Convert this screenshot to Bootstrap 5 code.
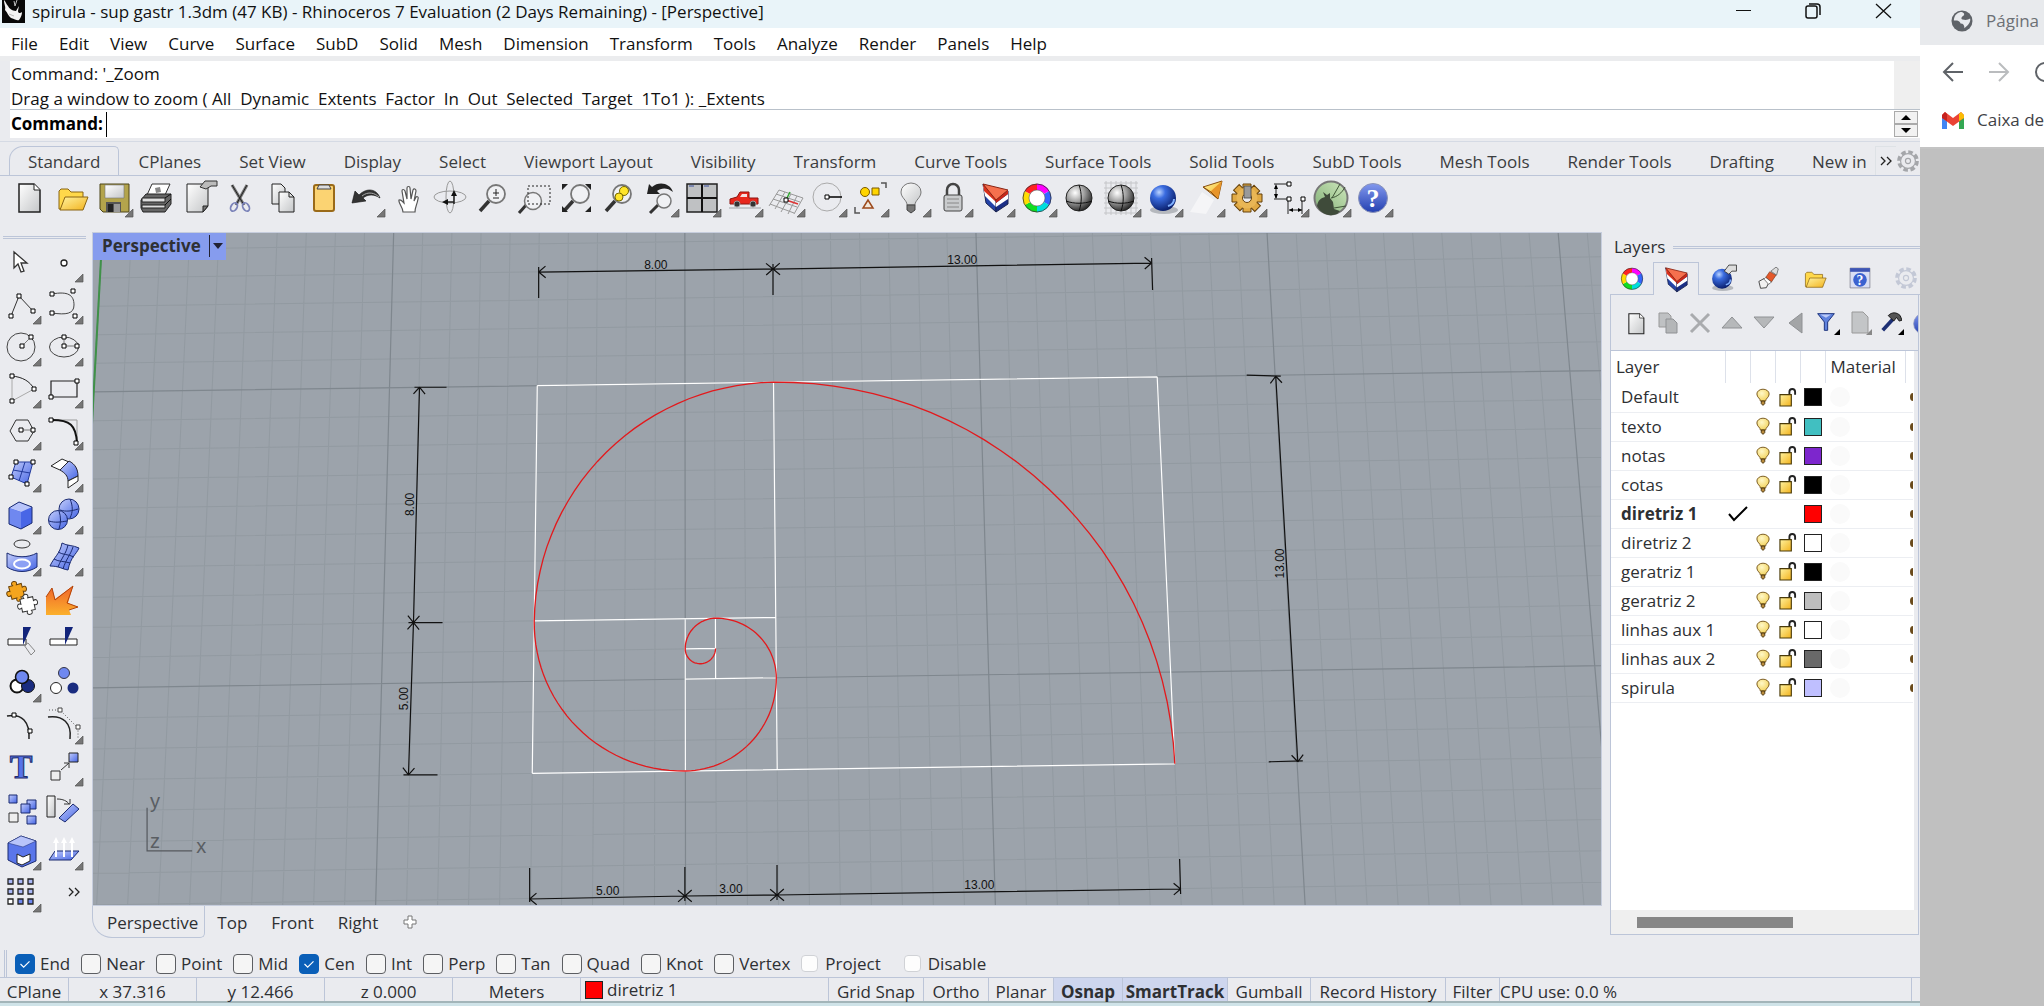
<!DOCTYPE html>
<html lang="en">
<head>
<meta charset="utf-8">
<meta name="viewport" content="width=device-width, initial-scale=1">
<title>spirula - Rhinoceros 7</title>
<link rel="stylesheet" href="https://cdn.jsdelivr.net/npm/bootstrap@5.3.0/dist/css/bootstrap.min.css">
<style>
:root{--face:#eaebef;--line:#bcc5d8;--ink:#2e3033}
body{font-family:"Open Sans","Noto Sans",sans-serif;font-size:17px;line-height:24px;color:var(--ink);background:var(--face)}
button,input{font:inherit;color:inherit}
button{background:none;border:0;padding:0}
svg{display:block}
.titlebar{height:28px;background:#e9f4f9;color:#111;padding-left:2px}
.titlebar .caption{line-height:24px;padding-left:7px}
.winbtns{gap:45px;padding-right:24px;height:22px}
.menus{height:28px;background:#fff;padding-left:1px}
.menus a{color:#111;text-decoration:none;padding:0 11px 0 10px;line-height:32px}
.cmdarea{border-top:5px solid #ebecee;padding-left:10px;background:var(--face);height:85px}
.history{height:48px;background:#fff;color:#111;padding-left:1px;border-right:26px solid #efefef;white-space:pre;line-height:25px}
.cmdline{height:29px;background:#fff;border-top:1px solid #b9c1ca;color:#000;padding-left:1px}
.cmdline input{border:0;outline:0;background:none;min-width:0;border-left:1px solid #000;height:25px;margin-left:3px}
.spinner{padding-right:2px}
.spin{width:24px;height:13px;border:1px solid #aaa;background:#f2f2f2}
.grip{width:3px;border:solid var(--line);border-width:0 1px}
.toolzone{border-top:1px solid #d5dae4;height:91px}
.tabstrip{height:34px;padding-left:9px;border-bottom:1px solid var(--line);overflow:hidden}
.tabstrip .ttab{padding:0 18px;line-height:29px;height:29px;margin-top:4px;white-space:nowrap;border:1px solid transparent;color:#3b3d40}
.tabstrip .ttab.on{border-color:var(--line);border-bottom-color:var(--face);border-radius:14px 5px 0 0;height:30px}
.toolrow{padding-left:8px}
.tool{width:42px;height:42px;flex:none}
.leftbar{width:92px;flex:none}
.leftbar .grip2{height:3px;border:solid var(--line);border-width:1px 0;margin:4px 6px 2px 3px}
.leftgrid{display:grid;grid-template-columns:42px 42px}
.viewport{background:#9ca3ab;border:1px solid #c6cddd;min-width:0;min-height:0;overflow:hidden}
.vlabel{top:0;left:0;height:27px;background:#869cee;font-weight:700;line-height:26px;padding-left:9px}
.vlabel .bar{width:1px;height:22px;background:#223;margin:2px 0 0 8px}
.viewtabs{height:44px}
.viewtabs button{height:32px;padding:0 12px;line-height:34px}
.viewtabs .on{border:1px solid var(--line);border-top:0;border-radius:0 0 5px 20px;padding:0 6px 0 14px}
.osnaps{height:27px;padding-left:4px}
.osnaps label{margin-right:11px;gap:5px}
.osnaps input{width:20px;height:20px;appearance:none;border:1px solid #5c5e62;border-radius:4px;background:#f5f5f5;margin:0}
.osnaps input:checked{border-color:#0a5fb8;background:#0a5fb8 url("data:image/svg+xml,%3Csvg xmlns='http://www.w3.org/2000/svg' viewBox='0 0 20 20'%3E%3Cpath d='M5 10l3.500 3.500L15 7' fill='none' stroke='white' stroke-width='1.300'/%3E%3C/svg%3E")}
.osnaps .soft{gap:7px;margin-right:23px}
.osnaps .soft input{width:17px;height:17px;border-color:#d0d2d6;background:#fdfdfd}
.status{height:26px;border-top:1px solid var(--line);border-bottom:2px solid #a3b5b9;line-height:27px}
.status>*{border-right:1px solid var(--line);text-align:center;flex:none;height:23px;white-space:nowrap}
.status .on{background:#ced6ee;font-weight:700}
.deskedge{height:3px;background:#cfe3e8}
.side{width:318px;flex:none;padding-left:8px}
.side .grip2{height:3px;border:solid var(--line);border-width:1px 0}
.phead{height:30px}
.ptabs{height:33px}
.ptabs button{width:46px;height:33px;border-bottom:1px solid var(--line);flex:none;display:flex;justify-content:center;align-items:center}
.ptabs button:first-child{width:43px}
.ptabs button.on{border:1px solid var(--line);border-bottom:0}
.panelbox{border:1px solid var(--line);border-top:0;margin-right:1px;min-height:0}
.ptools{height:56px;overflow:hidden;padding-left:9px;border-bottom:1px solid var(--line)}
.ptools button{width:32px;height:36px;flex:none;display:flex;justify-content:center;align-items:center}
.layers{table-layout:fixed;width:302px;margin:0;border-collapse:collapse}
.layers th{height:32px;font-weight:400;border-right:1px solid #dde1ea;padding:0 0 0 5px;overflow:hidden;white-space:nowrap}
.layers td{height:29px;padding:0;border-bottom:1px solid #eceef2;vertical-align:middle}
.layers td svg{margin:auto}
.layers .nm{padding-left:10px;white-space:nowrap}
.swatch{width:18px;height:18px;border:1px solid #222;display:block;margin:0 auto}
.matdot{width:20px;height:20px;border-radius:50%;background:#fafafa;margin-left:5px}
.hscroll{height:24px;background:#efefef;padding:7px 0 0 26px}
.hscroll div{width:156px;height:11px;background:#878787}
.browser{width:124px;flex:none;background:#c0c0c0;overflow:hidden;white-space:nowrap}
.btab{height:45px;background:#e8eaed;color:#6c7075;padding:0 0 4px 31px;gap:13px}
.bnav{height:54px;background:#fff;padding-left:22px}
.bmarks{height:50px;background:#fff;color:#3f4246;padding:0 0 6px 22px;gap:13px;border-bottom:2px solid #c4c4c4}
</style>
<script src="https://cdn.jsdelivr.net/npm/bootstrap@5.3.0/dist/js/bootstrap.bundle.min.js"></script>
</head>
<body class="d-flex vh-100 overflow-hidden">

<svg width="0" height="0" class="position-absolute" aria-hidden="true">
<defs>
<linearGradient id="gDoc" x1="0" y1="0" x2="1" y2="1"><stop offset="0" stop-color="#fff"/><stop offset="1" stop-color="#c4c6c8"/></linearGradient>
<linearGradient id="gYel" x1="0" y1="0" x2="1" y2="1"><stop offset="0" stop-color="#fff3a0"/><stop offset="1" stop-color="#f2b21c"/></linearGradient>
<linearGradient id="gBlu" x1="0" y1="0" x2="1" y2="1"><stop offset="0" stop-color="#c3cdfb"/><stop offset="1" stop-color="#4464e4"/></linearGradient>
<linearGradient id="gOra" x1="0" y1="0" x2="0" y2="1"><stop offset="0" stop-color="#f0642a"/><stop offset="1" stop-color="#fbb02c"/></linearGradient>
<linearGradient id="gGreen" x1="1" y1="0" x2="0" y2="1"><stop offset="0" stop-color="#cfe8bd"/><stop offset="1" stop-color="#7fae74"/></linearGradient>
<radialGradient id="gBall" cx=".35" cy=".3" r=".75"><stop offset="0" stop-color="#fff"/><stop offset=".5" stop-color="#999"/><stop offset="1" stop-color="#222"/></radialGradient>
<radialGradient id="gSea" cx=".35" cy=".28" r=".8"><stop offset="0" stop-color="#bcd4ff"/><stop offset=".3" stop-color="#3a6ce0"/><stop offset="1" stop-color="#04155e"/></radialGradient>
<radialGradient id="gBulb" cx=".4" cy=".35" r=".7"><stop offset="0" stop-color="#fff8c8"/><stop offset="1" stop-color="#f3d25a"/></radialGradient>
<linearGradient id="gHelp" x1="0" y1="0" x2="0" y2="1"><stop offset="0" stop-color="#8298ee"/><stop offset="1" stop-color="#2340b0"/></linearGradient>
</defs>
<symbol id="fly" viewBox="0 0 42 42"><path d="M33 41l8-8v8z" fill="#777" stroke="#555" stroke-width=".7"/></symbol>
<symbol id="page" viewBox="0 0 42 42"><path d="M11 8h15l6 6v22H11z" fill="url(#gDoc)" stroke="#222" stroke-width="1.500"/><path d="M26 8v6h6" fill="#fff" stroke="#222"/></symbol>
<symbol id="open" viewBox="0 0 42 42"><path d="M9 33V15l2-2h7l3 3h12v17z" fill="#ffd84a" stroke="#8a6412"/><path d="M10 34l5-13h23l-5 13z" fill="url(#gYel)" stroke="#8a6412"/></symbol>
<symbol id="save" viewBox="0 0 42 42"><path d="M8 8h29v28H11l-3-3z" fill="#b3a44c" stroke="#4d4518"/><path d="M13 9h19v13H13z" fill="url(#gDoc)" stroke="#777" stroke-width=".6"/><path d="M14 26h15v10H14z" fill="#555"/><path d="M16 28h5v8h-5z" fill="#222"/><path d="M22 28h6v8h-6z" fill="#999"/></symbol>
<symbol id="print" viewBox="0 0 42 42"><path d="M13 19l5-11h18l-5 11z" fill="#fff" stroke="#333"/><path d="M21 12l5-1 1 5-5 1z" fill="#888"/><path d="M7 24l5-6h25v10l-6 8H9l-2-4z" fill="#666" stroke="#222"/><path d="M8 22h23v4H8zM8 29h23v3H8z" fill="#ddd" stroke="#222"/><path d="M31 22l6-4M31 29l6-6" stroke="#111"/></symbol>
<symbol id="props" viewBox="0 0 42 42"><path d="M11 8h21v22l-5 6H11z" fill="url(#gDoc)" stroke="#222"/><path d="M27 36v-6h5z" fill="#777" stroke="#222"/><path d="M24 11l5-6h12v5h-6l-5 3z" fill="#bbb" stroke="#333"/></symbol>
<symbol id="cut" viewBox="0 0 42 42"><path d="M14 9l12 20M29 9L18 29" stroke="#777" stroke-width="3"/><path d="M14 9l12 20M29 9L18 29" stroke="#222" stroke-width="1"/><ellipse cx="16" cy="31" rx="3" ry="4.500" transform="rotate(30 16 31)" fill="none" stroke="#7a82b8" stroke-width="1.800"/><ellipse cx="28" cy="31" rx="3" ry="4.500" transform="rotate(-30 28 31)" fill="none" stroke="#7a82b8" stroke-width="1.800"/></symbol>
<symbol id="copy" viewBox="0 0 42 42"><path d="M12 8h9l4 4v16H12z" fill="url(#gDoc)" stroke="#222"/><path d="M19 16h10l5 5v15H19z" fill="url(#gDoc)" stroke="#222"/><path d="M29 16v5h5" fill="none" stroke="#222"/></symbol>
<symbol id="paste" viewBox="0 0 42 42"><rect x="12" y="9" width="20" height="26" rx="2" fill="#fbd372" stroke="#9a6a18" stroke-width="2"/><path d="M17 9h10l2 4H15z" fill="#ddd" stroke="#444"/></symbol>
<symbol id="undo" viewBox="0 0 42 42"><path d="M8 27l3-12 4 4c8-8 18-6 21 3-6-4-12-4-17 0l3 3z" fill="#333" stroke="#111" stroke-width=".6"/><path d="M18 20c6-5 13-3 17 1" stroke="#aaa" fill="none"/></symbol>
<symbol id="pan" viewBox="0 0 42 42"><path d="M17 36c0-5-5-9-4-12 2-1 3 1 5 3l-2-12c0-2 2-2 3 0l2 8V12c0-2 3-2 3 0l1 11 2-9c1-2 3-1 3 1l-2 10 2-4c1-1 3 0 2 2-1 6-3 8-3 13z" fill="#fff" stroke="#555" stroke-width="1.200"/></symbol>
<symbol id="orbit" viewBox="0 0 42 42"><ellipse cx="22" cy="21" rx="4" ry="16" fill="none" stroke="#999"/><ellipse cx="22" cy="21" rx="16" ry="6" fill="none" stroke="#999"/><path d="M26 19v9m-7-2h7" stroke="#222" stroke-width="1.500"/><path d="M23 20l3-6 3 6zM20 23l-6 3 6 3z" fill="#111"/></symbol>
<symbol id="lens" viewBox="0 0 42 42"><path d="M19 25l-9 10" stroke="#333" stroke-width="3.500"/><circle cx="26" cy="18" r="9" fill="#f0f1f4" stroke="#777" stroke-width="1.800"/></symbol>
<symbol id="zdyn" viewBox="0 0 42 42"><use href="#lens"/><path d="M26 13v7m-3-3h6m-6 5h6" stroke="#222"/></symbol>
<symbol id="zwin" viewBox="0 0 42 42"><path d="M15 28l-8 9" stroke="#333" stroke-width="3"/><circle cx="21" cy="25" r="8.500" fill="#f0f1f4" stroke="#777" stroke-width="1.500"/><path d="M16 10h22v18H16z" fill="none" stroke="#222" stroke-dasharray="2 2"/></symbol>
<symbol id="zext" viewBox="0 0 42 42"><use href="#lens"/><path d="M8 8h6l-6 6zM37 8h-6l6 6zM8 36h6l-6-6zM37 36h-6l6-6z" fill="#222"/></symbol>
<symbol id="zsel" viewBox="0 0 42 42"><use href="#lens"/><circle cx="28" cy="15" r="4.500" fill="#ffe52a" stroke="#776a00"/><circle cx="23" cy="21" r="4" fill="#ffe52a" stroke="#776a00"/></symbol>
<symbol id="zprev" viewBox="0 0 42 42"><path d="M20 29l-8 8" stroke="#333" stroke-width="3"/><circle cx="26" cy="25" r="7" fill="#f0f1f4" stroke="#777" stroke-width="1.500"/><path d="M9 18l2-10 3 3c7-6 18-4 21 5-6-5-12-4-16-1l3 3z" fill="#222"/></symbol>
<symbol id="views" viewBox="0 0 42 42"><path d="M7 8h30v28H7z" fill="#bfc1c3" stroke="#222" stroke-width="1.500"/><path d="M22 8v28M7 22h30" stroke="#111" stroke-width="2"/><path d="M9 10h5M24 10h5" stroke="#3b50a0"/></symbol>
<symbol id="car" viewBox="0 0 42 42"><path d="M7 32h32" stroke="#c4c6ca" stroke-width="2"/><path d="M8 28v-5l7-2 3-5h9v6h9v6z" fill="#e8261c" stroke="#8c1410"/><path d="M18 21l2-3h5v3z" fill="#f4dede"/><circle cx="15" cy="28" r="3" fill="#333" stroke="#999"/><circle cx="31" cy="28" r="3" fill="#333" stroke="#999"/></symbol>
<symbol id="cgrid" viewBox="0 0 42 42"><g fill="none" stroke="#999"><path d="M15 14L5 30M21 16L11 33M27 18L17 36M33 20L24 38M39 22L30 38M15 14l24 8M12 18l24 8M9 23l24 8M6 28l24 9"/></g><path d="M22 24l12 4" stroke="#d33" stroke-width="1.500"/><path d="M22 24l4-8" stroke="#3a3" stroke-width="1.500"/><path d="M20 22h4v4h-4z" fill="#fff" stroke="#000"/></symbol>
<symbol id="cplane" viewBox="0 0 42 42"><circle cx="21" cy="21" r="14" fill="none" stroke="#aaa"/><path d="M21 21h15" stroke="#000" stroke-width="1.500"/><path d="M19 19h4v4h-4z" fill="#fff" stroke="#000"/></symbol>
<symbol id="sel" viewBox="0 0 42 42"><path d="M33 7h5v5M7 31v6h5" fill="none" stroke="#555" stroke-width="1.500"/><circle cx="17" cy="16" r="4.500" fill="#ffd500" stroke="#7a5800"/><path d="M24 12h7v7h-7z" fill="#ffd500" stroke="#7a5800"/><path d="M20 24l-5 8h10z" fill="#f2e7da" stroke="#9c4a1c" stroke-width="1.500"/></symbol>
<symbol id="bulbg" viewBox="0 0 42 42"><path d="M17 29c0-5-6-7-6-13a10 9 0 0 1 20 0c0 6-6 8-6 13z" fill="url(#gDoc)" stroke="#777"/><path d="M17 29h8v5l-4 3-4-3z" fill="#777" stroke="#444"/></symbol>
<symbol id="lock" viewBox="0 0 42 42"><path d="M15 21v-7a6 6 0 0 1 12 0v7" fill="none" stroke="#444" stroke-width="2.500"/><rect x="12" y="19" width="18" height="16" rx="2" fill="#c9cbcd" stroke="#444"/><path d="M15 23h12M15 27h12M15 31h12" stroke="#888"/></symbol>
<symbol id="layer" viewBox="0 0 42 42"><path d="M9 8l13 16v12L12 27z" fill="#2443a8" stroke="#1a2450"/><path d="M9 10l13 14v7L11 20z" fill="#fff"/><path d="M9 8l13 13v5L10 15z" fill="#d8301c"/><path d="M22 24l12-9v13l-12 8z" fill="#1b2f86" stroke="#1a2450"/><path d="M22 27l12-9v5l-12 8z" fill="#fff"/><path d="M22 22l12-8v4l-12 9z" fill="#c9281a"/><path d="M9 8l25 6-12 10z" fill="#f5704e" stroke="#8a2414"/></symbol>
<symbol id="wheel" viewBox="0 0 42 42"><g fill="none" stroke-width="6.500"><path d="M21 11a11 11 0 0 1 9.500 5.500" stroke="#f0f"/><path d="M30.500 16.500a11 11 0 0 1 0 11" stroke="#36f"/><path d="M30.500 27.500A11 11 0 0 1 21 33" stroke="#0dd"/><path d="M21 33a11 11 0 0 1-9.500-5.500" stroke="#1d2"/><path d="M11.500 27.500a11 11 0 0 1 0-11" stroke="#fd0"/><path d="M11.500 16.500A11 11 0 0 1 21 11" stroke="#f22"/></g><circle cx="21" cy="22" r="14" fill="none" stroke="#333" stroke-width=".8"/><circle cx="21" cy="22" r="8" fill="#fff" stroke="#555" stroke-width=".6"/></symbol>
<symbol id="ball" viewBox="0 0 42 42"><circle cx="21" cy="22" r="13" fill="url(#gBall)" stroke="#222"/><path d="M8 25c8 3 18 3 26 0M21 9c3 8 3 18 0 26" fill="none" stroke="#111"/></symbol>
<symbol id="ballg" viewBox="0 0 42 42"><path d="M4 7h34M4 12h34M4 17h34M4 22h34M4 27h34M4 32h34M4 37h34M6 5v34M11 5v34M16 5v34M21 5v34M26 5v34M31 5v34M36 5v34" stroke="#c4c5c8"/><use href="#ball"/></symbol>
<symbol id="sea" viewBox="0 0 42 42"><ellipse cx="22" cy="34" rx="14" ry="4" fill="#b5b8bd"/><circle cx="21" cy="22" r="13" fill="url(#gSea)"/><path d="M26 30c4-1 6-4 6-7" fill="none" stroke="#7fb0ff" stroke-width="2"/></symbol>
<symbol id="spot" viewBox="0 0 42 42"><path d="M6 36l12-20 12 8-8 14z" fill="#fff" opacity=".5"/><path d="M19 11l19-6-4 18z" fill="url(#gYel)" stroke="#8a5010"/><path d="M38 5l-4 18-8-7z" fill="#e8952a"/><path d="M19 11l8 5 7 7" fill="none" stroke="#8a5010"/></symbol>
<symbol id="cog" viewBox="0 0 42 42"><g transform="translate(21 22)"><g fill="#e0a944" stroke="#65400a"><path d="M-4-14h8v8h-8zM-4 6h8v8h-8zM-15-4h8v8h-8zM7-4h8v8H7z"/><path d="M-4-14h8v8h-8zM-4 6h8v8h-8zM-15-4h8v8h-8zM7-4h8v8H7z" transform="rotate(45)"/></g><circle r="10.500" fill="#e9b655"/><circle r="4.500" fill="#eaebef" stroke="#65400a"/><path d="M-3-12h7V0h-7z" fill="#9a9a9a" stroke="#444" stroke-width=".8"/></g></symbol>
<symbol id="dims" viewBox="0 0 42 42"><path d="M6 8h14M6 23h14M8 10v12M20 23v15M34 25v13M21 34h13" fill="none" stroke="#222"/><path d="M8 8l-2 5h4zM8 23l-2-5h4zM21 34l4-2v4zM34 34l-4-2v4z" fill="#000"/><path d="M19 6h4v4h-4zM19 21h4v4h-4zM33 21h4v4h-4z" fill="#fff" stroke="#000"/></symbol>
<symbol id="hopper" viewBox="0 0 42 42"><circle cx="21" cy="22" r="16.500" fill="url(#gGreen)" stroke="#777" stroke-width="2"/><path d="M7 30c1-6 4-8 8-9l-2-5 4 3 3-2v5l3 4 1 7 6 2-3 3c-8 3-16 0-20-8z" fill="#3f4b3a"/><path d="M21 22c6-1 11-5 14-11M22 22l8-14M24 32l12-2" fill="none" stroke="#3f5537" stroke-width="1"/></symbol>
<symbol id="help" viewBox="0 0 42 42"><circle cx="21" cy="22" r="14.500" fill="url(#gHelp)" stroke="#8a93b8"/></symbol>

<symbol id="arrow" viewBox="0 0 42 42"><path d="M14 11v16l4-4 3 8 3-1-3-8h6z" fill="#fff" stroke="#333" stroke-width="1.300"/></symbol>
<symbol id="pt" viewBox="0 0 42 42"><circle cx="22" cy="22" r="3" fill="#fff" stroke="#222" stroke-width="1.300"/></symbol>
<symbol id="pline" viewBox="0 0 42 42"><path d="M11 33l8-20 14 15" fill="none" stroke="#333"/><path d="M9 31h4v4H9zM17 11h4v4h-4zM31 26h4v4h-4z" fill="#fff" stroke="#000"/></symbol>
<symbol id="curve" viewBox="0 0 42 42"><path d="M10 11c16-3 22 1 22 11 0 9-8 10-22 8" fill="none" stroke="#444"/><path d="M8 9h4v4H8zM29 6h4v4h-4zM31 31h4v4h-4zM8 28h4v4H8z" fill="#fff" stroke="#000"/></symbol>
<symbol id="circ" viewBox="0 0 42 42"><circle cx="21" cy="22" r="14" fill="none" stroke="#444"/><path d="M22 21l9-9" stroke="#777"/><path d="M20 19h4v4h-4zM29 10h4v4h-4z" fill="#fff" stroke="#000"/></symbol>
<symbol id="ell" viewBox="0 0 42 42"><ellipse cx="22" cy="22" rx="14.500" ry="10" fill="none" stroke="#444"/><path d="M22 13v8h13" fill="none" stroke="#777"/><path d="M20 10h4v4h-4zM20 19h4v4h-4zM33 19h4v4h-4z" fill="#fff" stroke="#000"/></symbol>
<symbol id="arc" viewBox="0 0 42 42"><path d="M12 9v25l22-12" fill="none" stroke="#aaa"/><path d="M12 9c10 1 18 5 22 13" fill="none" stroke="#222"/><path d="M10 7h4v4h-4zM10 32h4v4h-4zM32 20h4v4h-4z" fill="#fff" stroke="#000"/></symbol>
<symbol id="rct" viewBox="0 0 42 42"><path d="M9 14h26v16H9z" fill="none" stroke="#222" stroke-width="1.200"/><path d="M33 12h4v4h-4zM7 28h4v4H7z" fill="#fff" stroke="#000"/></symbol>
<symbol id="poly" viewBox="0 0 42 42"><path d="M10 22l6-11h12l6 11-6 10H16z" fill="none" stroke="#333"/><path d="M21 21h12" stroke="#777"/><path d="M19 19h4v4h-4zM31 19h4v4h-4z" fill="#fff" stroke="#000"/></symbol>
<symbol id="fil" viewBox="0 0 42 42"><path d="M10 11h25v23" fill="none" stroke="#999"/><path d="M10 11c18 0 24 5 25 23" fill="none" stroke="#111" stroke-width="2"/><path d="M7 9h4v4H7zM32 32h4v4h-4z" fill="#fff" stroke="#000"/></symbol>
<symbol id="srf" viewBox="0 0 42 42"><path d="M16 11h17l-6 22-16-7z" fill="url(#gBlu)" stroke="#223a9c"/><path d="M25 11l-6 19M13 19l17 3" fill="none" stroke="#223a9c"/><path d="M14 9h4v4h-4zM31 9h4v4h-4zM9 24h4v4H9zM25 31h4v4h-4z" fill="#fff" stroke="#000"/></symbol>
<symbol id="bend" viewBox="0 0 42 42"><path d="M9 15L20 8l7 3-9 8z" fill="#fff" stroke="#222"/><path d="M27 10c6 3 9 8 9 15l-10 5c0-5-3-8-8-11z" fill="url(#gBlu)" stroke="#223"/><path d="M36 25v5l-10 7v-7z" fill="#fff" stroke="#222"/></symbol>
<symbol id="box" viewBox="0 0 42 42"><path d="M9 15l10-6 13 5v16l-11 6-12-5z" fill="#4866e6"/><path d="M9 15l10-6 13 5-11 5z" fill="#b8c4fa"/><path d="M9 15l12 4v17l-12-5z" fill="#6f88f0"/><path d="M9 15l10-6 13 5v16l-11 6-12-5z" fill="none" stroke="#1a2a70"/></symbol>
<symbol id="balls" viewBox="0 0 42 42"><circle cx="27" cy="16" r="10" fill="url(#gBlu)" stroke="#1a2a70"/><circle cx="16" cy="27" r="9.500" fill="url(#gBlu)" stroke="#1a2a70"/><path d="M7 28c6 2 12 1 18 0M17 18c2 6 2 12 0 18M18 17c6 2 12 1 18-1M28 6c3 7 3 13 0 19" fill="none" stroke="#1a2a70"/></symbol>
<symbol id="proj" viewBox="0 0 42 42"><ellipse cx="22" cy="9" rx="8" ry="4" fill="none" stroke="#333"/><path d="M7 18c9 5 21 5 30 0v14c-9 6-21 6-30 0z" fill="url(#gBlu)" stroke="#1a2a70"/><ellipse cx="22" cy="29" rx="8" ry="4.500" fill="#8ca0f4" stroke="#fff" stroke-width="2"/></symbol>
<symbol id="mesh" viewBox="0 0 42 42"><path d="M20 8c5 3 11 2 17 5-3 7-8 8-11 22-6-1-9-4-18-4 4-9 10-12 12-23z" fill="url(#gBlu)" stroke="#1a2a70"/><path d="M16 17c5 3 10 2 16 5M12 24c5 3 10 2 16 4M26 10c-2 9-6 12-10 22M31 12c-3 9-7 12-10 22" fill="none" stroke="#1a2a70"/></symbol>
<symbol id="puz" viewBox="0 0 42 42"><g id="piece" fill="#f5a51e" stroke="#6b430a"><g transform="translate(16 14) rotate(-15)"><path d="M-6-6h4c-3-5 7-5 4 0h5v4c5-3 5 7 0 4v5h-4c3 5-7 5-4 0h-5v-4c-5 3-5-7 0-4z"/></g></g><g fill="#fff" stroke="#333"><g transform="translate(27 27) rotate(-12)"><path d="M-6-6h4c-3-5 7-5 4 0h5v4c5-3 5 7 0 4v5h-4c3 5-7 5-4 0h-5v-4c-5 3-5-7 0-4z"/></g></g></symbol>
<symbol id="boom" viewBox="0 0 42 42"><path d="M4 38V20l6-9 3 11L31 9l-5 17 10 4-9 3 2 5z" fill="url(#gOra)"/><path d="M4 20l6-9 3 12L31 9l-6 17 11 4-9 3" fill="none" stroke="#b34408"/></symbol>
<symbol id="trim" viewBox="0 0 42 42"><path d="M8 20h18v6H8z" fill="#fff" stroke="#222"/><path d="M23 8h8l-8 18z" fill="#12247a"/><path d="M24 26l4-2 7 8-4 4z" fill="none" stroke="#888"/></symbol>
<symbol id="split" viewBox="0 0 42 42"><path d="M8 20h27v6H8z" fill="#fff" stroke="#222"/><path d="M23 8h8l-8 18z" fill="#12247a"/></symbol>
<symbol id="grp" viewBox="0 0 42 42"><circle cx="17" cy="25" r="6.500" fill="#fff" stroke="#111" stroke-width="2"/><circle cx="28" cy="25" r="6.500" fill="#1a2c80" stroke="#111"/><circle cx="22" cy="16" r="6.500" fill="#6f88f0" stroke="#111" stroke-width="1.500"/></symbol>
<symbol id="ungrp" viewBox="0 0 42 42"><circle cx="14" cy="27" r="5.500" fill="#fff" stroke="#222"/><circle cx="31" cy="27" r="5.500" fill="#1a2c80"/><circle cx="22" cy="12" r="5.500" fill="#6f88f0" stroke="#334"/></symbol>
<symbol id="ptson" viewBox="0 0 42 42"><path d="M7 13c15-3 23 6 22 23" fill="none" stroke="#222" stroke-width="1.500"/><path d="M12 10h4v4h-4zM28 26h4v4h-4z" fill="#fff" stroke="#000"/></symbol>
<symbol id="cpts" viewBox="0 0 42 42"><path d="M6 14c15-2 24 6 22 22" fill="none" stroke="#222" stroke-width="1.500"/><path d="M7 7h11l18 18v10" fill="none" stroke="#555" stroke-dasharray="1 2"/><path d="M16 5h4v4h-4zM34 22h4v4h-4z" fill="#fff" stroke="#444"/></symbol>
<symbol id="blank" viewBox="0 0 42 42"></symbol>
<symbol id="move" viewBox="0 0 42 42"><path d="M9 26h9v9H9z" fill="#eee" stroke="#333"/><path d="M27 8h9v9h-9z" fill="url(#gBlu)" stroke="#222"/><path d="M19 25l8-7m-5 0h5v5" fill="none" stroke="#333"/></symbol>
<symbol id="arr" viewBox="0 0 42 42"><g fill="url(#gBlu)" stroke="#1a2a70"><path d="M9 8h8v8H9z"/><path d="M27 13h9v9h-9z"/><path d="M21 17h9v9h-9z"/><path d="M27 29h9v8h-9z"/></g><path d="M9 26h9v9H9z" fill="#eee" stroke="#333"/></symbol>
<symbol id="rot" viewBox="0 0 42 42"><path d="M5 9h8v21H5z" fill="url(#gDoc)" stroke="#222"/><path d="M15 12c6 0 10 2 12 5m-5 0h6v-5" fill="none" stroke="#333"/><path d="M17 31l14-14 6 5-14 13z" fill="url(#gBlu)" stroke="#1a2a70"/></symbol>
<symbol id="bool" viewBox="0 0 42 42"><path d="M8 14l13-7 15 5v20l-14 6-14-7z" fill="#5a76ea" stroke="#1a2a70"/><path d="M8 14l13-7 15 5-13 6z" fill="#b8c4fa" stroke="#1a2a70" stroke-width=".5"/><path d="M17 25l6 3 7-3v7l-8 4-5-2z" fill="#fff" stroke="#222"/></symbol>
<symbol id="extr" viewBox="0 0 42 42"><path d="M7 31l6-9h24l-8 9z" fill="url(#gBlu)" stroke="#1a2a70"/><path d="M14 28V12M22 28V12M30 28V12" stroke="#fff" stroke-width="2"/><path d="M11 14l3-6 3 6zM19 14l3-6 3 6zM27 14l3-6 3 6z" fill="#fff"/></symbol>
<symbol id="nine" viewBox="0 0 42 42"><g fill="#a9b7f6" stroke="#222" stroke-width="1.300"><path d="M8 8h5v5H8zM18 8h5v5h-5zM28 8h5v5h-5zM8 18h5v5H8zM18 18h5v5h-5zM28 18h5v5h-5z"/><path d="M18 28h5v5h-5zM28 28h5v5h-5z" fill="#6f88f0"/><path d="M8 28h5v5H8z" fill="#fff"/></g></symbol>
<symbol id="more" viewBox="0 0 42 42"><path d="M27 17l4 4-4 4M33 17l4 4-4 4" fill="none" stroke="#222" stroke-width="1.300"/></symbol>

<symbol id="marker" viewBox="0 0 42 42"><path d="M5 27l9-5 8 8-4 8-10 1z" fill="#f1f1f1" stroke="#333" stroke-width="1.500"/><path d="M17 20l7-10 11 6-8 12z" fill="#e4582a" stroke="#6b2a10"/><path d="M17 20l10 8-5 4-8-9z" fill="#fff" stroke="#333"/><path d="M26 9l9-7 4 3-3 11z" fill="#ddd" stroke="#333"/></symbol>
<symbol id="gear" viewBox="0 0 42 42"><circle cx="21" cy="21" r="16" fill="none" stroke="currentColor" stroke-width="6" stroke-dasharray="8 4.566"/><circle cx="21" cy="21" r="13" fill="#eaebef" stroke="currentColor" stroke-width="2"/><circle cx="21" cy="21" r="4.500" fill="none" stroke="currentColor" stroke-width="2"/></symbol>
<symbol id="funnel" viewBox="0 0 24 24"><path d="M2 2h20l-8 10v10h-4V12z" fill="#5f82de" stroke="#1f357e" stroke-width="1.200"/><path d="M5 3h13l-6 4z" fill="#bccbf8"/></symbol>
<symbol id="hammer" viewBox="0 0 24 24"><path d="M14 9L3 21" stroke="#1d2f74" stroke-width="4"/><path d="M9 5c4-4 9-4 13 0l2 5-3 1-3-4-3 4z" fill="#555" stroke="#111"/></symbol>
<symbol id="bulb" viewBox="0 0 16 20"><path d="M5 14c0-3-4-4-4-8a7 5.500 0 0 1 14 0c0 4-4 5-4 8z" fill="url(#gBulb)" stroke="#6b4a10"/><path d="M6 14h4v3l-2 2-2-2z" fill="#b98a3a" stroke="#3d2a08"/></symbol>
<symbol id="ulock" viewBox="0 0 19 20"><path d="M11 8V4a3 3 0 0 1 6 0v3" fill="none" stroke="#222" stroke-width="2"/><path d="M1 7h12v12H1z" fill="url(#gYel)" stroke="#4a3a08" stroke-width="1.200"/></symbol>
</svg>

<main class="d-flex flex-column flex-fill" style="min-width:0">
  <header class="titlebar d-flex align-items-start">
    <svg width="23" height="23" viewBox="0 0 23 23" role="img" aria-label="Rhinoceros"><path d="M0 0h23v23H0z" fill="#080808"/><path d="M2 0c0 5 2 6 1 10 3 3 3 6 6 8 4 1 6 3 8 2 2-3 3-5 3-8-2 2-4 1-4-1l1-5-3 5c-4 0-7-3-8-5C4 4 4 2 2 0z" fill="#f4f4f4"/><path d="M12 1l1 5 2-6M7 14l5 2" stroke="#bbb" fill="none"/></svg>
    <div class="caption flex-fill text-nowrap">spirula - sup gastr 1.3dm (47 KB) - Rhinoceros 7 Evaluation (2 Days Remaining) - [Perspective]</div>
    <div class="winbtns d-flex align-items-center">
      <button aria-label="Minimize"><svg width="25" height="18" viewBox="0 0 25 18"><path d="M5 8.500h15" stroke="#111"/></svg></button>
      <button aria-label="Restore"><svg width="25" height="18" viewBox="0 0 25 18"><rect x="5" y="4" width="11" height="12" rx="2" fill="none" stroke="#111" stroke-width="1.500"/><path d="M8 2h8q3 0 3 3v8" fill="none" stroke="#111" stroke-width="1.500"/></svg></button>
      <button aria-label="Close"><svg width="25" height="18" viewBox="0 0 25 18"><path d="M5 2l15 14M20 2L5 16" stroke="#111" stroke-width="1.300"/></svg></button>
    </div>
  </header>
  <nav class="menus d-flex">
    <a href="#">File</a><a href="#">Edit</a><a href="#">View</a><a href="#">Curve</a><a href="#">Surface</a><a href="#">SubD</a><a href="#">Solid</a><a href="#">Mesh</a><a href="#">Dimension</a><a href="#">Transform</a><a href="#">Tools</a><a href="#">Analyze</a><a href="#">Render</a><a href="#">Panels</a><a href="#">Help</a>
  </nav>

  <section class="cmdarea">
    <div class="history"><div>Command: '_Zoom</div><div>Drag a window to zoom ( All  Dynamic  Extents  Factor  In  Out  Selected  Target  1To1 ): _Extents</div></div>
    <div class="cmdline d-flex align-items-center">
      <label for="cmd" class="fw-bold">Command:</label><input id="cmd" class="flex-fill">
      <div class="spinner d-flex flex-column">
        <button class="spin d-flex justify-content-center align-items-center" aria-label="Previous"><svg width="10" height="5" viewBox="0 0 10 5"><path d="M0 5l5-5 5 5z"/></svg></button>
        <button class="spin d-flex justify-content-center align-items-center" aria-label="Next"><svg width="10" height="5" viewBox="0 0 10 5"><path d="M0 0l5 5 5-5z"/></svg></button>
      </div>
    </div>
  </section>

  <section class="toolzone">
    <div class="d-flex tabstrip">
      <div class="d-flex flex-fill overflow-hidden" style="min-width:0">
        <button class="ttab on">Standard</button><button class="ttab">CPlanes</button><button class="ttab">Set View</button><button class="ttab">Display</button><button class="ttab">Select</button><button class="ttab">Viewport Layout</button><button class="ttab">Visibility</button><button class="ttab">Transform</button><button class="ttab">Curve Tools</button><button class="ttab">Surface Tools</button><button class="ttab">Solid Tools</button><button class="ttab">SubD Tools</button><button class="ttab">Mesh Tools</button><button class="ttab">Render Tools</button><button class="ttab">Drafting</button><button class="ttab pe-0">New in</button>
      </div>
      <button class="border-start border-top px-1 mt-1" aria-label="More tabs"><svg width="12" height="14" viewBox="0 0 12 14"><path d="M1 3l4 4-4 4M7 3l4 4-4 4" fill="none" stroke="#222" stroke-width="1.300"/></svg></button>
      <button class="pt-1" aria-label="Options" style="color:#a4a6aa"><svg width="24" height="24"><use href="#gear"/></svg></button>
    </div>
    <div class="toolrow d-flex" id="maintools"></div>
  </section>

  <section class="d-flex flex-fill" style="min-height:0">
    <aside class="leftbar">
      <div class="grip2"></div>
      <div class="leftgrid" id="sidetools"></div>
    </aside>
    <div class="d-flex flex-column flex-fill" style="min-width:0">
      <div class="viewport position-relative flex-fill">
        <svg id="scene" width="100%" height="100%" viewBox="93 233 1508 671" preserveAspectRatio="xMinYMin slice" font-family="Liberation Sans,sans-serif" font-size="12">
          <g id="grid" fill="none"></g>
          <g id="figure" fill="none" stroke="#fff" stroke-width="1.200"></g>
          <path id="spiral" fill="none" stroke="#e3191c" stroke-width="1.300"/>
          <g id="dimensions" stroke="#111" stroke-width="1.200" fill="none"></g>
          <g fill="none" stroke="#55595e" stroke-width="1.200"><path d="M147 807v43h45"/></g>
          <g fill="#5a5e63" font-size="20"><text x="150" y="807">y</text><text x="150" y="847">z</text><text x="196" y="852">x</text></g>
        </svg>
        <button class="vlabel position-absolute d-flex">Perspective<span class="bar"></span><svg width="16" height="26" viewBox="0 0 16 26"><path d="M3 10h10l-5 6z" fill="#223"/></svg></button>
      </div>
      <div class="viewtabs d-flex"><button class="on">Perspective</button><button>Top</button><button>Front</button><button>Right</button><button aria-label="New viewport tab"><svg width="16" height="16" viewBox="0 0 16 16"><path d="M6 2h4v4h4v4h-4v4H6v-4H2V6h4z" fill="#fff" stroke="#777"/></svg></button></div>
    </div>
    <aside class="side d-flex flex-column">
      <div class="phead d-flex align-items-center"><div class="ps-1 pe-2">Layers</div><div class="grip2 flex-fill"></div></div>
      <div class="ptabs d-flex overflow-hidden">
        <button aria-label="Properties"><svg width="32" height="32"><use href="#wheel"/></svg></button>
        <button class="on" aria-label="Layers"><svg width="36" height="36"><use href="#layer"/></svg></button>
        <button aria-label="Rendering"><svg width="32" height="32" viewBox="0 0 42 42"><use href="#sea"/><path d="M24 12l6-8h10v8h-6l-4 4z" fill="#ddd" stroke="#222"/></svg></button>
        <button aria-label="Materials"><svg width="24" height="24"><use href="#marker"/></svg></button>
        <button aria-label="Libraries"><svg width="30" height="30"><use href="#open"/></svg></button>
        <button aria-label="Help"><svg width="26" height="26" viewBox="0 0 42 42"><path d="M5 5h32v32H5z" fill="#d9def4" stroke="#667"/><path d="M5 5h32v6H5z" fill="#3e55b4"/><circle cx="21" cy="24" r="11" fill="#3b62d0"/><text x="21" y="32" text-anchor="middle" font-size="22" font-family="Liberation Serif,serif" font-weight="700" fill="#fff">?</text></svg></button>
        <button aria-label="Options" style="color:#c3c8d6"><svg width="24" height="24"><use href="#gear"/></svg></button>
      </div>
      <div class="panelbox d-flex flex-column flex-fill">
        <div class="ptools d-flex align-items-center">
          <button aria-label="New layer"><svg width="30" height="30"><use href="#page"/></svg></button>
          <button aria-label="New sublayer"><svg width="22" height="22" viewBox="0 0 22 22"><path d="M2 1h9l3 3v11H2z" fill="#bfc1c3" stroke="#999"/><path d="M9 7h7l4 4v10H9z" fill="#b4b6b8" stroke="#8f9194"/></svg></button>
          <button aria-label="Delete"><svg width="22" height="22" viewBox="0 0 22 22"><path d="M2 2l18 18M20 2L2 20" stroke="#a9abae" stroke-width="3"/></svg></button>
          <button aria-label="Move up"><svg width="22" height="22" viewBox="0 0 22 22"><path d="M1 16L11 5l10 11z" fill="#b6b8ba" stroke="#8f9194"/></svg></button>
          <button aria-label="Move down"><svg width="22" height="22" viewBox="0 0 22 22"><path d="M1 5l10 11L21 5z" fill="#b6b8ba" stroke="#8f9194"/></svg></button>
          <button aria-label="Move out"><svg width="22" height="22" viewBox="0 0 22 22"><path d="M17 1v20L4 11z" fill="#a3a5a7" stroke="#8f9194"/></svg></button>
          <button aria-label="Filter"><svg width="24" height="24" viewBox="0 0 24 24"><use href="#funnel" width="20" height="22"/><path d="M24 18v6h-6z"/></svg></button>
          <button aria-label="Report"><svg width="24" height="24" viewBox="0 0 24 24"><path d="M4 1h11l5 5v16H4z" fill="#c3c5c7" stroke="#999"/><path d="M24 18v6h-6z" fill="#888"/></svg></button>
          <button aria-label="Tools"><svg width="24" height="24" viewBox="0 0 24 24"><use href="#hammer" width="22" height="22"/><path d="M24 18v6h-6z"/></svg></button>
          <button aria-label="Help"><svg width="30" height="30"><use href="#help"/></svg></button>
        </div>
        <div class="bg-white flex-fill overflow-hidden me-1" style="min-height:0">
          <table class="layers">
            <colgroup><col style="width:114px"><col style="width:25px"><col style="width:25px"><col style="width:25px"><col style="width:25px"><col style="width:80px"><col></colgroup>
            <thead><tr><th>Layer</th><th></th><th></th><th></th><th></th><th>Material</th><th class="border-0"></th></tr></thead>
            <tbody id="layerrows"></tbody>
          </table>
        </div>
        <div class="hscroll"><div></div></div>
      </div>
      <div style="height:15px"></div>
    </aside>
  </section>

  <form class="osnaps d-flex align-items-center" id="osnaps"><span class="grip align-self-stretch me-2"></span></form>

  <footer class="status d-flex">
    <div style="width:69px">CPlane</div><div style="width:128px">x 37.316</div><div style="width:128px">y 12.466</div><div style="width:128px">z 0.000</div><div style="width:128px">Meters</div>
    <div class="d-flex align-items-center" style="width:248px"><span class="swatch ms-1 me-1" style="background:#f00"></span>diretriz 1</div>
    <button style="width:95px">Grid Snap</button><button style="width:65px">Ortho</button><button style="width:65px">Planar</button><button class="on" style="width:69px">Osnap</button><button class="on" style="width:105px">SmartTrack</button><button style="width:83px">Gumball</button><button style="width:135px">Record History</button><button style="width:54px">Filter</button>
    <div class="flex-fill text-start me-2">CPU use: 0.0 %</div>
  </footer>
  <div class="deskedge"></div>
</main>

<aside class="browser">
  <div class="btab d-flex align-items-center"><svg class="flex-shrink-0" width="22" height="22" viewBox="0 0 23 23"><circle cx="11.500" cy="11.500" r="11" fill="#5f6368"/><path d="M10 2c3 0 5 2 3 4-2 1-3 3-1 4 4 1 6 0 8-1 1 4-3 8-6 10 0-3-1-5-4-5-1-3-4-3-7-3 0-5 3-8 7-9z" fill="#e8eaed"/></svg><span>Página</span></div>
  <div class="bnav d-flex align-items-center gap-4">
    <svg class="flex-shrink-0" width="22" height="20" viewBox="0 0 22 20"><path d="M21 10H3M11 1l-9 9 9 9" fill="none" stroke="#5f6368" stroke-width="2"/></svg>
    <svg class="flex-shrink-0" width="22" height="20" viewBox="0 0 22 20"><path d="M1 10h18M11 1l9 9-9 9" fill="none" stroke="#babcbe" stroke-width="2"/></svg>
    <svg class="flex-shrink-0" width="22" height="22" viewBox="0 0 22 22"><circle cx="11" cy="11" r="9" fill="none" stroke="#5f6368" stroke-width="2"/></svg>
  </div>
  <div class="bmarks d-flex align-items-center"><svg class="flex-shrink-0" width="22" height="17" viewBox="0 0 22 17"><path d="M0 3v14h5V7z" fill="#4285f4"/><path d="M22 3v14h-5V7z" fill="#34a853"/><path d="M0 3v3l11 8 11-8V3l-3-3-8 6-8-6z" fill="#ea4335"/><path d="M0 3v3l5 3V2L3 0z" fill="#c5221f"/><path d="M22 3v3l-5 3V2l2-2z" fill="#fbbc04"/></svg><span>Caixa de</span></div>
</aside>

<script>
const $ = id => document.getElementById(id);

// Toolbars: [symbol, label, has flyout, lettering drawn over the symbol]
const tool = ([id, label, fly, over]) =>
  `<button class="tool" type="button" aria-label="${label}"><svg width="42" height="42" font-family="Liberation Serif,serif" font-weight="700"><use href="#${id}"/>${over || ''}${fly ? '<use href="#fly"/>' : ''}</svg></button>`;
$('maintools').innerHTML = [
  ['page','New'],['open','Open'],['save','Save',1],['print','Print'],['props','Properties'],['cut','Cut'],['copy','Copy'],['paste','Paste'],
  ['undo','Undo',1],['pan','Pan'],['orbit','Rotate view'],['zdyn','Zoom dynamic'],['zwin','Zoom window'],['zext','Zoom extents'],['zsel','Zoom selected'],
  ['zprev','Undo view',1],['views','Viewports',1],['car','Set view',1],['cgrid','CPlane',1],['cplane','Osnap',1],['sel','Select',1],['bulbg','Hide',1],
  ['lock','Lock',1],['layer','Layers',1],['wheel','Properties',1],['ball','Shade'],['ballg','Shaded viewport',1],['sea','Render',1],['spot','Lights',1],
  ['cog','Options',1],['dims','Dimensions',1],['hopper','Grasshopper',1],
  ['help','Help',1,'<text x="21" y="31" text-anchor="middle" font-size="26" fill="#fff">?</text>']].map(tool).join('');
$('sidetools').innerHTML = [
  ['arrow','Select'],['pt','Point',1],['pline','Polyline',1],['curve','Curve',1],['circ','Circle',1],['ell','Ellipse',1],['arc','Arc',1],['rct','Rectangle',1],
  ['poly','Polygon',1],['fil','Fillet',1],['srf','Surface',1],['bend','Sweep',1],['box','Box',1],['balls','Boolean',1],['proj','Project',1],['mesh','Mesh',1],
  ['puz','Join'],['boom','Explode'],['trim','Trim'],['split','Split'],['grp','Group',1],['ungrp','Ungroup'],['ptson','Edit points'],['cpts','Control points',1],
  ['blank','Text',0,'<text x="21" y="33" text-anchor="middle" font-size="34" fill="#5673ea" stroke="#1d2b6b">T</text>'],
  ['move','Move',1],['arr','Copy'],['rot','Rotate'],['bool','Solid',1],['extr','Extrude',1],['nine','Array',1],['more','More']].map(tool).join('');

$('osnaps').innerHTML += ['End','Near','Point','Mid','Cen','Int','Perp','Tan','Quad','Knot','Vertex','Project','Disable'].map((n, i) =>
  `<label class="d-flex align-items-center${i > 10 ? ' soft' : ''}"><input type="checkbox"${n == 'End' || n == 'Cen' ? ' checked' : ''}>${n}</label>`).join('');

$('layerrows').innerHTML = [['Default','#000'],['texto','#41bfc1'],['notas','#7d26cd'],['cotas','#000'],['diretriz 1','#f00',1],['diretriz 2','#fff'],
  ['geratriz 1','#000'],['geratriz 2','#bebebe'],['linhas aux 1','#fff'],['linhas aux 2','#696969'],['spirula','#bfbfff']].map(([n, c, cur]) =>
  `<tr><td class="nm${cur ? ' fw-bold' : ''}">${n}</td>
   <td>${cur ? '<svg width="20" height="16" viewBox="0 0 20 16"><path d="M1 8l5 6L19 1" fill="none" stroke="#000" stroke-width="2"/></svg>' : ''}</td>
   <td>${cur ? '' : '<svg width="14" height="19"><use href="#bulb"/></svg>'}</td>
   <td>${cur ? '' : '<svg width="18" height="19"><use href="#ulock"/></svg>'}</td>
   <td><span class="swatch" style="background:${c}"></span></td><td><div class="matdot"></div></td>
   <td><svg width="8" height="10" viewBox="0 0 8 10" class="me-0"><ellipse cx="8" cy="5" rx="3" ry="4" fill="#6a4a1a"/></svg></td></tr>`).join('');

// Perspective map of the construction plane: the 21 x 13 rectangle onto the view
const W = 21, H = 13, A = [531.6, 772.5], B = [1173.2, 763], C = [1155.6, 376.6], D = [536.6, 385.4];
const sx = A[0]-B[0]+C[0]-D[0], sy = A[1]-B[1]+C[1]-D[1];
const dx1 = B[0]-C[0], dx2 = D[0]-C[0], dy1 = B[1]-C[1], dy2 = D[1]-C[1], det = dx1*dy2 - dx2*dy1;
const g = (sx*dy2 - dx2*sy)/det, h = (dx1*sy - sx*dy1)/det;
const P = (x, y) => { const u = x/W, v = y/H, w = g*u + h*v + 1;
  return [((B[0]-A[0]+g*B[0])*u + (D[0]-A[0]+h*D[0])*v + A[0])/w, ((B[1]-A[1]+g*B[1])*u + (D[1]-A[1]+h*D[1])*v + A[1])/w].map(n => n.toFixed(1)); };
const seg = (a, b, c, d) => `M${P(a, b)}L${P(c, d)}`;
let minor = '', major = '';
for (let x = -15; x <= 45; x++) { const s = seg(x, -12, x, 24); (x - 5) % 10 ? minor += s : major += s; }
for (let y = -12; y <= 24; y++) { const s = seg(-15, y, 45, y); (y - 3) % 10 ? minor += s : major += s; }
$('grid').innerHTML = `<path d="${minor}" stroke="#929aa1"/><path d="${major}" stroke="#7f878e" stroke-width="1.200"/><path d="${seg(-15, 3, -15, 24)}" stroke="#3f9148" stroke-width="2"/>`;
$('figure').innerHTML = `<path d="${seg(0,0,21,0)}${seg(21,0,21,13)}${seg(21,13,0,13)}${seg(0,13,0,0)}${seg(8,0,8,13)}${seg(0,5,8,5)}${seg(5,0,5,5)}${seg(5,3,8,3)}${seg(6,3,6,5)}${seg(5,4,6,4)}"/>`;
// Quarter arcs of the spiral: centre, radius, start and end angle
const pts = [];
[[8,0,13,0,90],[8,5,8,90,180],[5,5,5,180,270],[5,3,3,270,360],[6,3,2,0,90],[6,4,1,90,180],[5.5,4,.5,180,360]].forEach(([cx, cy, r, a, b]) => {
  for (let t = a; t <= b; t += 3) pts.push(P(cx + r*Math.cos(t*Math.PI/180), cy + r*Math.sin(t*Math.PI/180))); });
$('spiral').setAttribute('d', 'M' + pts.join('L'));

// Dimension lines: ends, then label text and its centre
const dim = (x1, y1, x2, y2, t, tx, ty, turn) => {
  const a = Math.atan2(y2-y1, x2-x1), k = (x, y, s) => [.7, -.7].map(o => `M${x} ${y}l${(s*9*Math.cos(a+o)).toFixed(1)} ${(s*9*Math.sin(a+o)).toFixed(1)}`).join('');
  return `<path d="M${x1} ${y1}L${x2} ${y2}${k(x1,y1,1)}${k(x2,y2,-1)}"/><text x="${tx}" y="${ty+4}" text-anchor="middle" fill="#111" stroke="none"${turn ? ` transform="rotate(-90 ${tx} ${ty})"` : ''}>${t}</text>`; };
$('dimensions').innerHTML =
  dim(538,272,772,269,'8.00',655,265) + dim(772,269,1150,263,'13.00',961,260) +
  dim(419,387,413,622,'8.00',410,504,1) + dim(413,622,408,774,'5.00',404,698,1) +
  dim(529,898,684,895,'5.00',607,890) + dim(684,895,776,894,'3.00',730,888) + dim(776,894,1179,888,'13.00',978,884) +
  dim(1274,376,1296,761,'13.00',1278,563,1) +
  '<path d="M538 267v31M772 264v31M1150 258l1 32M414 387h32M408 622h34M403 774h34M529 867v34M684 866v34M776 864v35M1178 858l1 35M1245 375l34 1M1267 761l34-1"/>';
</script>
</body>
</html>
